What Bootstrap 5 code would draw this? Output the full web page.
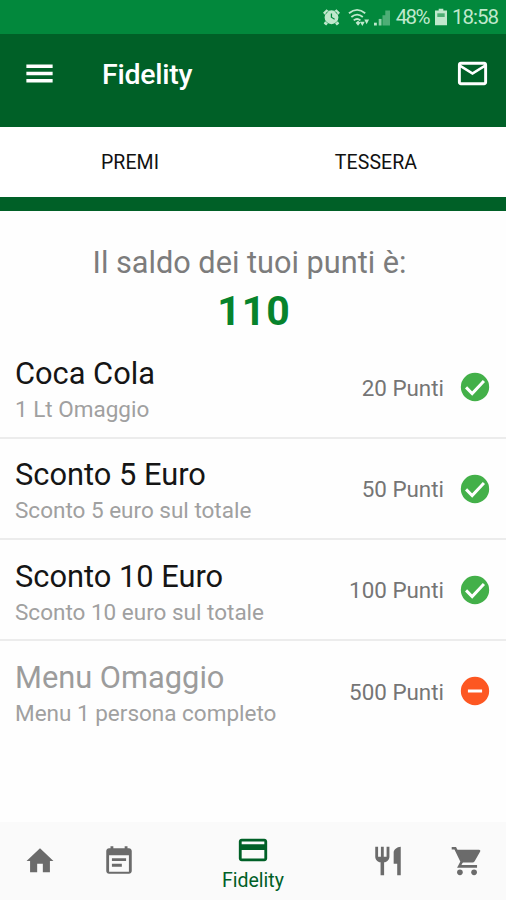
<!DOCTYPE html>
<html lang="it">
<head>
<meta charset="utf-8">
<meta name="viewport" content="width=device-width, initial-scale=1">
<title>Fidelity</title>
<link href="https://cdn.jsdelivr.net/npm/bootstrap@5.3.0/dist/css/bootstrap.min.css" rel="stylesheet">
<style>
body { font-family: Roboto, "Noto Sans", sans-serif; background: #fefefe; height: 900px; overflow: hidden; }
svg { display: block; flex: none; fill: currentColor; }
.ic { width: 34px; height: 34px; }
.ic-bar { width: 35px; height: 35px; }
.status { height: 34px; background: #02883c; color: #bfe8cc; font-size: 20.5px; letter-spacing: -1px; line-height: 36px; padding-right: 8px; }
.status .pct { letter-spacing: -1.600px; margin-left: 6px; margin-right: 1px; }
.status .clock { margin-left: 5px; }
.status .batt { margin-left: 5px; }
.appbar { height: 93px; background: #006027; padding: 0 16px 15px 22px; }
.appbar h1 { font-size: 28.5px; font-weight: 500; letter-spacing: -.25px; line-height: 32px; margin: 4px 0 0 45px; }
.tabs { height: 84px; border-bottom: 14px solid #006027; padding: 0 7px; }
.tabs a { font-size: 19.500px; line-height: 72px; color: #111; letter-spacing: .1px; }
.saldo { height: 126.300px; padding-top: 32px; padding-right: 7px; }
.saldo p { font-size: 30.700px; line-height: 39px; color: #7c7c7c; }
.saldo strong { font-size: 41px; line-height: 59px; color: #07832c; letter-spacing: 1px; padding-left: 9px; }
.award { height: 101.300px; padding: 1px 14px 0 15px; border-bottom: 2px solid #ececec; }
.award:last-child { border: 0; padding-bottom: 2px; }
.award h2 { font-size: 30.800px; line-height: 38px; color: #151515; font-weight: 400; padding-top: 6px; }
.award p { font-size: 22.500px; line-height: 33px; color: #a0a0a0; }
.award .pts { font-size: 22.400px; color: #757575; margin-right: 14px; padding-top: 2px; }
.off h2 { color: #9c9c9c; }
.ok { color: #43b049; }
.no { color: #fd5722; }
.bottom { height: 78px; background: #fafafa; color: #6b6b6b; }
.bottom a { color: inherit; }
.bottom .current { color: #006027; padding-top: 4px; }
.bottom .current span { font-size: 19.500px; line-height: 27px; }
.g-side { width: 79px; }
</style>
<script src="https://cdn.jsdelivr.net/npm/bootstrap@5.3.0/dist/js/bootstrap.bundle.min.js"></script>
</head>
<body class="d-flex flex-column">
<div class="status d-flex align-items-center justify-content-end">
  <svg width="17" height="18" viewBox="0 0 24 24"><path fill-rule="evenodd" d="M12 2.500a9.800 9.800 0 1 0 0 19.600 9.800 9.800 0 0 0 0-19.600zm-1 4.500h1.800v5l4 2.500-.8 1.400-5-3.100zM0 6l5-5 3 2.500L3 9zM24 6l-5-5-3 2.500L21 9zM3 18l4 3-2.500 3L1 21zM21 18l-4 3 2.500 3L23 21z"/></svg>
  <svg class="ms-2" width="22" height="19" viewBox="0 0 23 19"><g fill="none" stroke="currentColor" stroke-width="1.900"><path d="M1 5q8.500-7 17 0M3.500 9q6-5 12 0M6 12.500q3.500-3 7 0"/></g><path d="M8 15l2.500-2 2.500 2-2.500 3zM12.500 14h5L15 18.500zM17 11.500h5l-2.500 5z"/></svg>
  <svg class="ms-1" width="16" height="17" viewBox="0 0 17 17"><path d="M0 14h3v3H0z"/><path opacity=".75" d="M5 10h3v7H5z"/><path opacity=".4" d="M9 6h3v11H9zM12 1h5v16h-5z"/></svg>
  <span class="pct">48%</span>
  <svg class="batt" width="12" height="18" viewBox="0 0 13 18"><path d="M4 0h5v2h4v16H0V2h4z"/><path fill="#4cae73" d="M2.500 5h8v4h-8z"/></svg>
  <span class="clock">18:58</span>
</div>
<header class="appbar d-flex align-items-center text-white">
  <svg class="ic-bar" viewBox="0 0 24 24"><path d="M3 18.200h18v-2.400H3v2.400zm0-5h18v-2.400H3v2.400zm0-7.400v2.400h18V5.800H3z"/></svg>
  <h1>Fidelity</h1>
  <svg class="ic-bar ms-auto" viewBox="0 0 24 24"><path d="M20 4H4c-1.100 0-1.990.900-1.990 2L2 18c0 1.100.900 2 2 2h16c1.100 0 2-.900 2-2V6c0-1.100-.900-2-2-2zm0 14H4V8l8 5 8-5v10zm-8-7L4 6h16l-8 5z"/></svg>
</header>
<nav class="tabs d-flex bg-white text-center">
  <a class="flex-fill w-50 text-decoration-none" href="#">PREMI</a>
  <a class="flex-fill w-50 text-decoration-none" href="#">TESSERA</a>
</nav>
<main class="flex-grow-1">
  <section class="saldo text-center">
    <p class="mb-0">Il saldo dei tuoi punti è:</p>
    <strong class="d-block">110</strong>
  </section>
  <section>
    <div class="award d-flex align-items-center">
      <div class="me-auto"><h2 class="mb-0">Coca Cola</h2><p class="mb-0">1 Lt Omaggio</p></div>
      <span class="pts">20 Punti</span>
      <svg class="ic ok" viewBox="0 0 24 24"><circle cx="12" cy="12" r="10"/><path fill="none" stroke="#fff" stroke-width="2.100" d="M5.700 12.300l4.300 4.300 8.300-8.900"/></svg>
    </div>
    <div class="award d-flex align-items-center">
      <div class="me-auto"><h2 class="mb-0">Sconto 5 Euro</h2><p class="mb-0">Sconto 5 euro sul totale</p></div>
      <span class="pts">50 Punti</span>
      <svg class="ic ok" viewBox="0 0 24 24"><circle cx="12" cy="12" r="10"/><path fill="none" stroke="#fff" stroke-width="2.100" d="M5.700 12.300l4.300 4.300 8.300-8.900"/></svg>
    </div>
    <div class="award d-flex align-items-center">
      <div class="me-auto"><h2 class="mb-0">Sconto 10 Euro</h2><p class="mb-0">Sconto 10 euro sul totale</p></div>
      <span class="pts">100 Punti</span>
      <svg class="ic ok" viewBox="0 0 24 24"><circle cx="12" cy="12" r="10"/><path fill="none" stroke="#fff" stroke-width="2.100" d="M5.700 12.300l4.300 4.300 8.300-8.900"/></svg>
    </div>
    <div class="award off d-flex align-items-center">
      <div class="me-auto"><h2 class="mb-0">Menu Omaggio</h2><p class="mb-0">Menu 1 persona completo</p></div>
      <span class="pts">500 Punti</span>
      <svg class="ic no" viewBox="0 0 24 24"><path d="M12 2a10 10 0 1 0 0 20 10 10 0 0 0 0-20zm5 11H7v-2h10v2z"/></svg>
    </div>
  </section>
</main>
<footer class="bottom d-flex align-items-center">
  <a class="g-side d-flex justify-content-center" href="#"><svg class="ic" viewBox="0 0 24 24"><path d="M10 20v-6h4v6h5v-8h2.500L12 3 2.500 12H5v8z"/></svg></a>
  <a class="g-side d-flex justify-content-center" href="#"><svg class="ic" viewBox="0 0 24 24"><path d="M17 10H7v2h10v-2zm2-7h-1V1.500h-2V3H8V1.500H6V3H5c-1.110 0-1.990.900-1.990 2L3 19c0 1.100.890 2 2 2h14c1.100 0 2-.900 2-2V5c0-1.100-.900-2-2-2zm0 16.500H5V8h14v11.500zm-5-5.500H7v2h7v-2z"/></svg></a>
  <a class="current flex-fill d-flex flex-column align-items-center text-decoration-none" href="#"><svg class="ic" viewBox="0 0 24 24"><path d="M20 4H4c-1.110 0-1.990.890-1.990 2L2 18c0 1.110.890 2 2 2h16c1.110 0 2-.890 2-2V6c0-1.110-.890-2-2-2zm0 14H4v-6h16v6zm0-10H4V6h16v2z"/></svg><span>Fidelity</span></a>
  <a class="g-side d-flex justify-content-center" href="#"><svg class="ic" viewBox="0 0 24 24"><path d="M11 9H9V2H7v7H5V2H3v7c0 2.120 1.660 3.840 3.750 3.970V22h2.500v-9.030C11.340 12.840 13 11.120 13 9V2h-2v7zm5-3v8h2.500v8H21V2c-2.760 0-5 2.240-5 4z"/></svg></a>
  <a class="g-side d-flex justify-content-center" href="#"><svg class="ic" viewBox="0 0 24 24"><path d="M4.500 4H20.500a.9.900 0 0 1 .8 1.300l-3.900 6.900q-.5.900-1.600.9H8.300z"/><path fill="none" stroke="currentColor" stroke-width="1.800" d="M1.200 3h2.500l4.600 9.500-1.800 3.300h12.600"/><circle cx="7" cy="20" r="2"/><circle cx="17" cy="20" r="2"/></svg></a>
</footer>
</body>
</html>
